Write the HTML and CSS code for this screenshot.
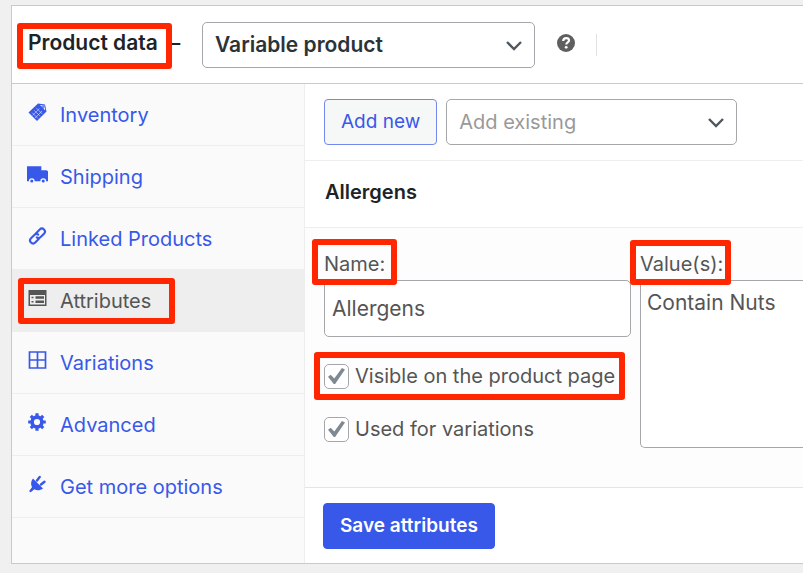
FILE: index.html
```html
<!DOCTYPE html>
<html lang="en">
<head>
<meta charset="UTF-8">
<meta name="viewport" content="width=device-width, initial-scale=1.0">
<title>Product data</title>
<link rel="stylesheet" href="styles.css">
</head>
<body>

<main class="panel">
  <header class="panel-header">
    <h2><label for="productType" class="mark mark-title">Product data</label> <span class="dash">–</span></h2>
    <div class="select-wrap type-select">
      <select id="productType">
        <option>Variable product</option>
      </select>
      <svg class="chevron" viewBox="0 0 18 12"><path d="M2 2l7 7 7-7"/></svg>
    </div>
    <button type="button" class="help" aria-label="Help">
      <svg viewBox="0 0 18 18"><circle cx="9" cy="9" r="9" fill="#5f5f5f"/><path d="M6.200 7C6.300 5.200 7.400 4.200 9.200 4.200c1.700 0 2.800.9 2.800 2.300 0 1.900-2.700 1.900-2.700 3.900" fill="none" stroke="#fff" stroke-width="2.200"/><circle cx="9.200" cy="13.300" r="1.400" fill="#fff"/></svg>
    </button>
    <span class="divider"></span>
  </header>

  <div class="panel-body">
    <nav class="tabs">
      <a href="#inventory"><span class="tab">
        <svg viewBox="0 0 20 20"><path d="M1 10.500L10.500 1.500 17.500 2.500 19 9.500 9.500 19z" fill="currentColor"/><path d="M4.500 10.500l6 6M6.700 8.300l6 6M8.900 6.100l6 6M5 13.500l7-7M7.500 16l7-7" stroke="#fafafa" stroke-width=".5" fill="none"/><path d="M12.500 3l4.500.6.8 5z" fill="#fafafa"/><circle cx="15.500" cy="5" r="1.200" fill="none" stroke="currentColor"/></svg>
        Inventory</span></a>
      <a href="#shipping"><span class="tab">
        <svg class="wide" viewBox="0 0 22 20"><path d="M0 2h15v4h5.500L22 7v10.500h-2a3 3 0 0 0-6 0H8a3 3 0 0 0-6 0H0z" fill="currentColor"/><circle cx="5" cy="17.400" r="1.600" fill="currentColor"/><circle cx="17" cy="17.400" r="1.600" fill="currentColor"/></svg>
        Shipping</span></a>
      <a href="#linked"><span class="tab">
        <svg viewBox="0 0 20 20"><g fill="none" stroke="currentColor" stroke-width="2.100" transform="rotate(-45 10 10)" stroke-linecap="round"><path d="M9 13H3.800a3 3 0 0 1 0-6h4.700a3 3 0 0 1 3 2.500"/><path d="M11 7h5.200a3 3 0 0 1 0 6h-4.700A3 3 0 0 1 8.500 10.500"/></g></svg>
        Linked Products</span></a>
      <a href="#attributes" class="active"><span class="tab mark mark-tab">
        <svg viewBox="0 0 20 20"><path d="M1 2h18v16H1z" fill="currentColor"/><path d="M2.500 7h15v9.500h-15z" fill="#eee"/><path d="M8 8.200h8.500v2.600H8zM8 12.500h8.500v2.600H8zM4 8.700h2v1.600H4zM4 13h2v1.600H4z" fill="currentColor"/></svg>
        Attributes</span></a>
      <a href="#variations"><span class="tab">
        <svg viewBox="0 0 20 20"><path d="M2 2h16v16H2zM10 2v16M2 10h16" fill="none" stroke="currentColor" stroke-width="1.700"/></svg>
        Variations</span></a>
      <a href="#advanced"><span class="tab">
        <svg viewBox="0 0 20 20"><circle cx="9.500" cy="10" r="4.900" fill="none" stroke="currentColor" stroke-width="3.600"/><path d="M9.500 1.200v3M9.500 15.800v3M.7 10h3M15.300 10h3M3.300 3.800l2 2M13.700 14.200l2 2M15.700 3.800l-2 2M5.300 14.200l-2 2" stroke="currentColor" stroke-width="3.200"/></svg>
        Advanced</span></a>
      <a href="#more"><span class="tab">
        <svg viewBox="0 0 20 20"><path d="M5.500 4.500l10 10c-2.500 2-6.200 2.300-8.700.8L3.500 17.500l-1-1L4.500 13C3 10.500 3.300 7 5.500 4.500z" fill="currentColor"/><path d="M9.500 6.500l2.700-3.500M13.500 10.500l3.500-2.700M3 17l2.500-2.500" stroke="currentColor" stroke-width="2.400" stroke-linecap="round"/></svg>
        Get more options</span></a>
    </nav>

    <form class="attributes">
      <div class="toolbar">
        <button type="button" class="btn">Add new</button>
        <div class="select-wrap existing-select">
          <select aria-label="Add existing">
            <option>Add existing</option>
          </select>
          <svg class="chevron" viewBox="0 0 18 12"><path d="M2 2l7 7 7-7"/></svg>
        </div>
      </div>

      <h3>Allergens</h3>

      <div class="fields">
        <div class="field">
          <label for="attrName" class="mark mark-name">Name:</label>
          <input type="text" id="attrName" value="Allergens">
          <label class="check mark mark-check"><input type="checkbox" checked> Visible on the product page</label>
          <label class="check"><input type="checkbox" checked> Used for variations</label>
        </div>
        <div class="field">
          <label for="attrValues" class="mark mark-value">Value(s):</label>
          <textarea id="attrValues">Contain Nuts</textarea>
        </div>
      </div>

      <div class="actions">
        <button type="submit" class="btn btn-primary">Save attributes</button>
      </div>
    </form>
  </div>
</main>

</body>
</html>
```

FILE: styles.css
```css
* { box-sizing: border-box; }
body {
  margin: 5px 0 0 11px;
  background: #f0f0f0;
  color: #555;
  font-family: Inter, "Liberation Sans", sans-serif;
  font-size: 20px;
  line-height: 26px;
  overflow-x: hidden;
}
input, select, textarea, button { font: inherit; color: inherit; margin: 0; }

.panel {
  background: #fff;
  border: 1px solid #c9cacc;
  border-right: 0;
  box-shadow: 0 1px 2px rgba(0,0,0,0.08);
}

/* Header */
.panel-header {
  display: flex;
  align-items: center;
  height: 78px;
  padding: 0 16px;
  border-bottom: 1px solid #c9cacc;
}
h2, h3 { margin: 0; font-size: 20px; font-weight: 600; color: #1d2327; }
h2 { display: flex; gap: 12px; width: 174px; margin-bottom: 4px; font-size: 21px; }
.dash { font-weight: 500; }
.select-wrap { position: relative; }
select {
  display: block;
  appearance: none;
  width: 100%;
  height: 46px;
  padding: 0 40px 0 12px;
  background: #fff;
  border: 1px solid #a5a7aa;
  border-radius: 5px;
}
.chevron {
  position: absolute;
  right: 12px;
  top: 18px;
  width: 18px;
  height: 12px;
  fill: none;
  stroke: #50575e;
  stroke-width: 2.4;
  pointer-events: none;
}
.type-select { flex: 0 1 333px; }
.type-select select { font-size: 21px; font-weight: 600; color: #2c3338; }
.help {
  width: 18px;
  height: 18px;
  padding: 0;
  margin: 0 21px 4px 22px;
  border: 0;
  background: none;
}
.help svg { display: block; }
.divider { width: 1px; height: 22px; background: #e2e2e2; }

/* Tabs */
.panel-body { display: flex; }
.tabs {
  flex: 0 0 293px;
  background: #fafafa;
  border-right: 1px solid #eee;
}
.tabs a {
  display: flex;
  align-items: center;
  height: 62px;
  padding-left: 15px;
  border-bottom: 1px solid #eee;
  color: #3858e9;
  text-decoration: none;
}
.tabs a.active { background: #eee; color: #555; }
.tab { display: flex; align-items: center; gap: 12px; }
.tab svg { width: 21px; height: 20px; margin-bottom: 6px; }

/* Attribute form */
.attributes { flex: 1; min-width: 0; }
.toolbar {
  display: flex;
  gap: 9px;
  padding: 15px 19px;
  border-bottom: 1px solid #eee;
}
.existing-select { flex: 0 1 291px; }
.existing-select select { color: #999; }
.btn {
  height: 46px;
  padding: 0 16px;
  background: #f6f7f7;
  border: 1px solid #7389ef;
  border-radius: 4px;
  color: #3858e9;
  font-size: 19px;
}
.btn-primary { background: #3858e9; border-color: #3858e9; color: #fff; font-weight: 600; }
h3 { padding: 18px 20px 22px; border-bottom: 1px solid #eee; }
.fields {
  display: grid;
  grid-template-columns: minmax(200px, 307px) 1fr;
  gap: 9px;
  padding: 23px 0 39px 19px;
  background: #fdfdfd;
  border-bottom: 1px solid #e5e5e5;
}
.field { display: flex; flex-direction: column; align-items: flex-start; }
.field > input, textarea {
  width: 100%;
  background: #fff;
  border: 1px solid #a5a7aa;
  border-radius: 5px;
  font-size: 21px;
}
.field > input { height: 57px; margin: 3px 0 26px; padding: 0 7px; }
textarea {
  display: block;
  height: 168px;
  margin-top: 3px;
  padding: 9px 6px;
  border-right: 0;
  border-radius: 5px 0 0 5px;
  resize: none;
}
.check { display: flex; align-items: center; gap: 6px; }
.check + .check { margin-top: 27px; }
.check input {
  appearance: none;
  width: 25px;
  height: 25px;
  border: 1px solid #a5a7aa;
  border-radius: 5px;
  background: #fff;
  display: grid;
  place-items: center;
}
.check input:checked::before {
  content: "";
  width: 17px;
  height: 16px;
  background: #7e8993;
  clip-path: polygon(0 55%, 16% 42%, 37% 65%, 82% 0, 100% 10%, 42% 100%, 34% 100%);
}
.actions { padding: 15px 18px 14px; }

/* Red highlight frames */
.mark { position: relative; }
.mark::after {
  content: "";
  position: absolute;
  inset: -12px -12px -8px;
  border: 6px solid #ff2600;
  border-radius: 3px;
  pointer-events: none;
}
.mark-title::after { inset: -7px -14px -13px -11px; }
.mark-tab::after { inset: -10px -24px -10px -9px; }
.mark-check::after { inset: -11px -10px; }
.mark-value::after { inset: -11px -8px -8px -10px; }
```
